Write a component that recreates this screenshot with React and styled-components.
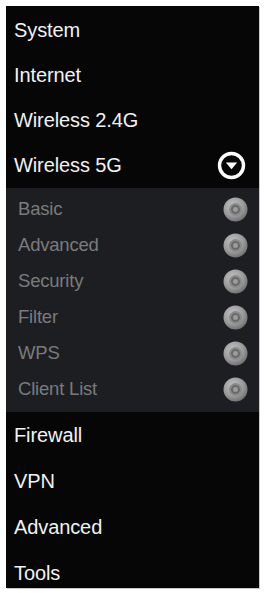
import React from "react"
import styled, { createGlobalStyle } from "styled-components"

const GlobalStyle = createGlobalStyle`
  html, body {
    margin: 0;
    padding: 0;
    background: #ffffff;
  }
  body {
    font-family: "Liberation Sans", Arial, sans-serif;
  }
`

const Page = styled.div`
  padding: 6px 6px 5px 6px;
  width: 265px;
  box-sizing: border-box;
`

const Panel = styled.nav`
  background: #060606;
  height: 582px;
  overflow: hidden;
  display: flex;
  flex-direction: column;
  padding-top: 2px;
  box-sizing: border-box;
  box-shadow: 1px 1px 0 #c9c9c9;
`

const MainRow = styled.div`
  flex: 0 0 ${(p) => (p.$tall ? 46 : 45)}px;
  display: flex;
  align-items: center;
  justify-content: space-between;
  padding: 0 13px 0 8px;
  color: #f2f2f2;
  font-size: 20px;
  letter-spacing: -0.1px;
`

const SubMenu = styled.div`
  background: #1d1e21;
  display: flex;
  flex-direction: column;
  padding: 3px 0 5px;
`

const SubRow = styled.div`
  height: 36px;
  display: flex;
  align-items: center;
  justify-content: space-between;
  padding: 0 11px 0 12px;
  color: #7a7b7e;
  font-size: 18.5px;
  letter-spacing: -0.2px;
`

const ExpandIcon = () => (
  <svg width="29" height="29" viewBox="0 0 29 29">
    <circle cx="14.5" cy="14.5" r="12" fill="none" stroke="#ffffff" strokeWidth="3.4" />
    <path d="M8.8 11.4 L20.2 11.4 L14.5 18.3 Z" fill="#ffffff" />
  </svg>
)

const BulletIcon = ({ id }) => (
  <svg width="25" height="25" viewBox="0 0 25 25">
    <defs>
      <radialGradient id={`outer-${id}`} cx="40%" cy="35%" r="70%">
        <stop offset="0%" stopColor="#c4c4c4" />
        <stop offset="60%" stopColor="#9b9b9b" />
        <stop offset="100%" stopColor="#6c6c6c" />
      </radialGradient>
    </defs>
    <circle cx="12.5" cy="12.5" r="12" fill={`url(#outer-${id})`} />
    <circle cx="12.5" cy="12.5" r="6.5" fill="#8a8a8a" />
    <circle cx="12.5" cy="12.5" r="3.6" fill="none" stroke="#5f5f5f" strokeWidth="1.4" />
    <circle cx="12.5" cy="12.5" r="2" fill="#9c9c9c" />
  </svg>
)

const topItems = ["System", "Internet", "Wireless 2.4G"]
const subItems = ["Basic", "Advanced", "Security", "Filter", "WPS", "Client List"]
const bottomItems = ["Firewall", "VPN", "Advanced", "Tools"]

export default function App() {
  return (
    <>
      <GlobalStyle />
      <Page>
        <Panel>
          {topItems.map((label) => (
            <MainRow key={label}>{label}</MainRow>
          ))}
          <MainRow>
            Wireless 5G
            <ExpandIcon />
          </MainRow>
          <SubMenu>
            {subItems.map((label, i) => (
              <SubRow key={label}>
                {label}
                <BulletIcon id={i} />
              </SubRow>
            ))}
          </SubMenu>
          {bottomItems.map((label) => (
            <MainRow key={label} $tall>
              {label}
            </MainRow>
          ))}
        </Panel>
      </Page>
    </>
  )
}
